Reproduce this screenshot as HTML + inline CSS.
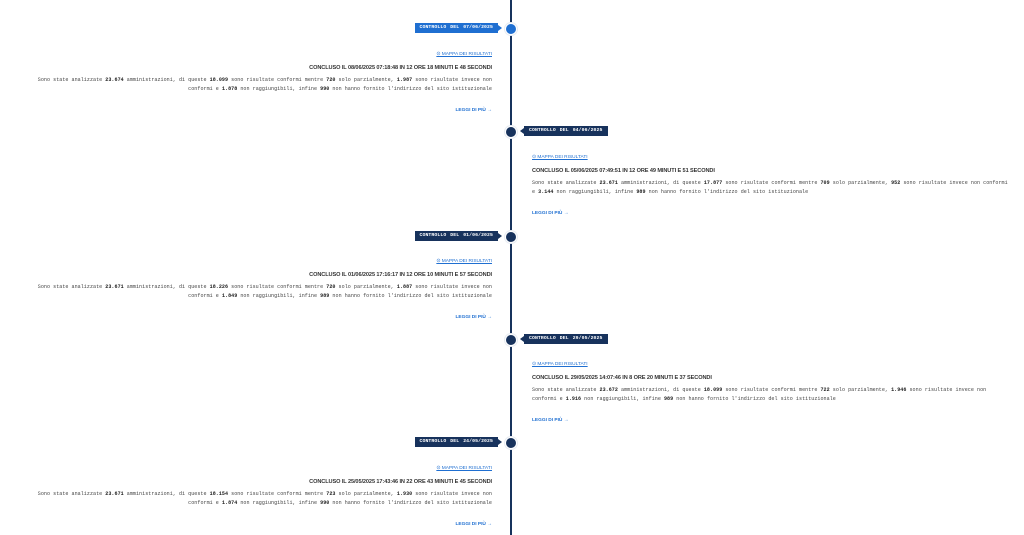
<!DOCTYPE html>
<html><head><meta charset="utf-8"><style>
body{margin:0;width:1024px;height:535px;background:#fff;position:relative;overflow:hidden;font-family:"Liberation Sans",sans-serif;color:#1a1a1a}
.line{position:absolute;left:510px;top:0;width:2px;height:535px;background:#17325c}
.dot{position:absolute;left:505px;width:10px;height:10px;border-radius:50%;background:#17325c;border:1px solid #fff;box-shadow:0 0 0 1px #e8ecf2}
.dot.a{background:#1f6fd1}
.badge{position:absolute;height:10px;line-height:10px;background:#17325c;color:#fff;font-weight:bold;font-size:4.8px;letter-spacing:.1px;padding:0 5px;word-spacing:1px;font-family:"Liberation Mono",monospace}
.badge.a{background:#1f6fd1}
.badge.l{right:526px}
.badge.r{left:524px}
.badge.l:after{content:"";position:absolute;right:-4px;top:2px;border-left:4px solid #17325c;border-top:3px solid transparent;border-bottom:3px solid transparent}
.badge.a:after{border-left-color:#1f6fd1}
.badge.r:before{content:"";position:absolute;left:-4px;top:2px;border-right:4px solid #17325c;border-top:3px solid transparent;border-bottom:3px solid transparent}
.it{position:absolute;width:456px}
.it.l{left:36px;text-align:right}
.it.r{left:532px;width:478px;text-align:left}
.map{font-size:4.8px;color:#1f6fd1;text-decoration:underline;height:8px}
.t{font-size:5.6px;font-weight:bold;letter-spacing:-.1px;margin-top:5px;color:#333}
.p{font-family:"Liberation Mono",monospace;font-size:5.05px;letter-spacing:.04px;line-height:9px;margin-top:5px;color:#444}
.p b{color:#222}
.lg{font-size:4.8px;font-weight:bold;color:#1f6fd1;margin-top:14px}
</style></head><body>
<div class="line"></div>

<div class="badge l a" style="top:23px">CONTROLLO DEL 07/06/2025</div>
<div class="dot a" style="top:23px"></div>
<div class="it l" style="top:52px"><div class="map">⊙ MAPPA DEI RISULTATI</div><div class="t">CONCLUSO IL 08/06/2025 07:18:48 IN 12 ORE 18 MINUTI E 48 SECONDI</div><div class="p">Sono state analizzate <b>23.674</b> amministrazioni, di queste <b>18.099</b> sono risultate conformi mentre <b>720</b> solo parzialmente, <b>1.987</b> sono risultate invece non conformi e <b>1.878</b> non raggiungibili, infine <b>990</b> non hanno fornito l'indirizzo del sito istituzionale</div><div class="lg">LEGGI DI PIÙ →</div></div>

<div class="badge r" style="top:126px">CONTROLLO DEL 04/06/2025</div>
<div class="dot" style="top:126px"></div>
<div class="it r" style="top:155px"><div class="map">⊙ MAPPA DEI RISULTATI</div><div class="t">CONCLUSO IL 05/06/2025 07:49:51 IN 12 ORE 49 MINUTI E 51 SECONDI</div><div class="p">Sono state analizzate <b>23.671</b> amministrazioni, di queste <b>17.877</b> sono risultate conformi mentre <b>709</b> solo parzialmente, <b>952</b> sono risultate invece non conformi e <b>3.144</b> non raggiungibili, infine <b>989</b> non hanno fornito l'indirizzo del sito istituzionale</div><div class="lg">LEGGI DI PIÙ →</div></div>

<div class="badge l" style="top:231px">CONTROLLO DEL 01/06/2025</div>
<div class="dot" style="top:231px"></div>
<div class="it l" style="top:259px"><div class="map">⊙ MAPPA DEI RISULTATI</div><div class="t">CONCLUSO IL 01/06/2025 17:16:17 IN 12 ORE 10 MINUTI E 57 SECONDI</div><div class="p">Sono state analizzate <b>23.671</b> amministrazioni, di queste <b>18.226</b> sono risultate conformi mentre <b>720</b> solo parzialmente, <b>1.887</b> sono risultate invece non conformi e <b>1.849</b> non raggiungibili, infine <b>989</b> non hanno fornito l'indirizzo del sito istituzionale</div><div class="lg">LEGGI DI PIÙ →</div></div>

<div class="badge r" style="top:334px">CONTROLLO DEL 29/05/2025</div>
<div class="dot" style="top:334px"></div>
<div class="it r" style="top:362px"><div class="map">⊙ MAPPA DEI RISULTATI</div><div class="t">CONCLUSO IL 29/05/2025 14:07:46 IN 8 ORE 20 MINUTI E 37 SECONDI</div><div class="p">Sono state analizzate <b>23.672</b> amministrazioni, di queste <b>18.099</b> sono risultate conformi mentre <b>722</b> solo parzialmente, <b>1.946</b> sono risultate invece non conformi e <b>1.916</b> non raggiungibili, infine <b>989</b> non hanno fornito l'indirizzo del sito istituzionale</div><div class="lg">LEGGI DI PIÙ →</div></div>

<div class="badge l" style="top:437px">CONTROLLO DEL 24/05/2025</div>
<div class="dot" style="top:437px"></div>
<div class="it l" style="top:466px"><div class="map">⊙ MAPPA DEI RISULTATI</div><div class="t">CONCLUSO IL 25/05/2025 17:43:46 IN 22 ORE 43 MINUTI E 45 SECONDI</div><div class="p">Sono state analizzate <b>23.671</b> amministrazioni, di queste <b>18.154</b> sono risultate conformi mentre <b>723</b> solo parzialmente, <b>1.930</b> sono risultate invece non conformi e <b>1.874</b> non raggiungibili, infine <b>990</b> non hanno fornito l'indirizzo del sito istituzionale</div><div class="lg">LEGGI DI PIÙ →</div></div>
</body></html>
